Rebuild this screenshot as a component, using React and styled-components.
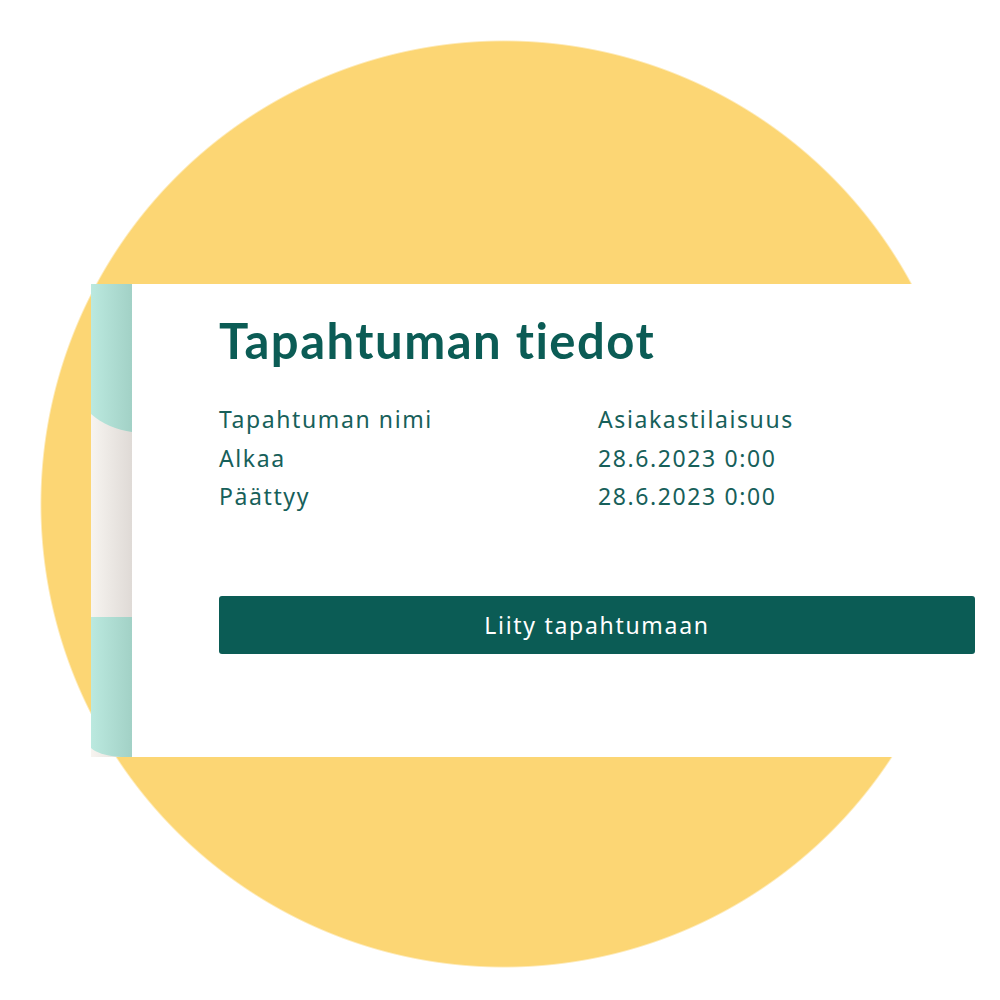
import React from 'react'
import styled, { createGlobalStyle } from 'styled-components'

const GlobalStyle = createGlobalStyle`
  html, body {
    margin: 0;
    padding: 0;
    background: #ffffff;
  }
  body {
    font-family: "Noto Sans", Lato, sans-serif;
  }
`

const details = [
  { label: 'Tapahtuman nimi', value: 'Asiakastilaisuus' },
  { label: 'Alkaa', value: '28.6.2023 0:00' },
  { label: 'Päättyy', value: '28.6.2023 0:00' },
]

const Strip = () => (
  <StripWrap>
    <svg width="41" height="473" viewBox="0 0 41 473">
      <defs>
        <linearGradient id="mint" x1="0" x2="1" y1="0" y2="0">
          <stop offset="0" stopColor="#bbe9df" />
          <stop offset="1" stopColor="#a2d1c6" />
        </linearGradient>
        <linearGradient id="cream" x1="0" x2="1" y1="0" y2="0">
          <stop offset="0" stopColor="#f7f4f0" />
          <stop offset="1" stopColor="#dfdad6" />
        </linearGradient>
      </defs>
      <rect x="0" y="0" width="41" height="473" fill="url(#cream)" />
      <path d="M0 0 H41 V148 C26 146 11 140 0 130 Z" fill="url(#mint)" />
      <path d="M0 333 H41 V473 H30 C14 472 4 468 0 464 Z" fill="url(#mint)" />
    </svg>
  </StripWrap>
)

export default function App() {
  return (
    <>
      <GlobalStyle />
      <Stage>
        <Card>
          <Strip />
          <Content>
            <Title>Tapahtuman tiedot</Title>
            <DetailGrid>
              {details.map(d => (
                <React.Fragment key={d.label}>
                  <Label>{d.label}</Label>
                  <Value>{d.value}</Value>
                </React.Fragment>
              ))}
            </DetailGrid>
            <JoinButton>Liity tapahtumaan</JoinButton>
          </Content>
        </Card>
      </Stage>
    </>
  )
}

const Stage = styled.div`
  width: 1000px;
  height: 1000px;
  box-sizing: border-box;
  padding: 284px 0 0 91px;
  background: radial-gradient(circle 464px at 504px 504px, #fcd674 99.6%, rgba(252, 214, 116, 0) 100%);
  overflow: hidden;
`

const Card = styled.div`
  display: flex;
  width: 909px;
  height: 473px;
  background: #ffffff;
`

const StripWrap = styled.div`
  flex: 0 0 41px;
  display: flex;
  svg {
    display: block;
  }
`

const Content = styled.div`
  flex: 1 1 auto;
  display: flex;
  flex-direction: column;
  padding: 26px 25px 0 87px;
`

const Title = styled.h1`
  margin: 0;
  font-family: Lato, sans-serif;
  font-weight: 700;
  font-size: 49px;
  line-height: 60px;
  color: #0b5c55;
  letter-spacing: 1.5px;
`

const DetailGrid = styled.div`
  display: grid;
  grid-template-columns: 379px 1fr;
  margin-top: 30px;
`

const Label = styled.div`
  font-size: 23px;
  line-height: 38.5px;
  letter-spacing: 1.6px;
  color: #17605a;
`

const Value = styled(Label)`
  letter-spacing: 1.6px;
`

const JoinButton = styled.button`
  margin-top: 80px;
  height: 58px;
  width: 100%;
  border: none;
  border-radius: 3px;
  background: #0b5c55;
  color: #ffffff;
  font-family: "Noto Sans", sans-serif;
  font-weight: 400;
  font-size: 23px;
  letter-spacing: 1.7px;
  cursor: pointer;
`
